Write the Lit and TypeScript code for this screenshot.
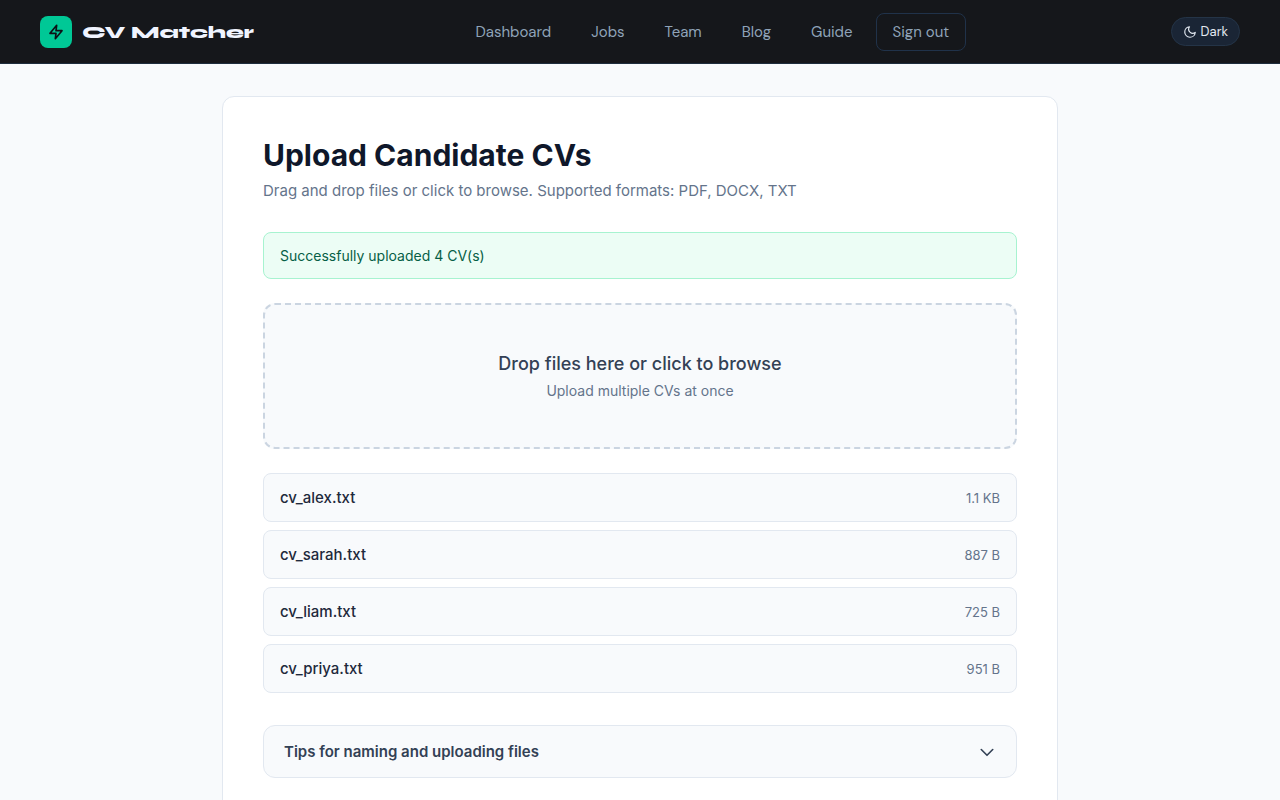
import { LitElement, html, css } from "lit";
import { customElement, property, state } from "lit/decorators.js";

interface CvFile {
  name: string;
  size: string;
}

@customElement("site-header")
export class SiteHeader extends LitElement {
  @property({ type: Array }) links: string[] = [];

  static styles = css`
    :host {
      display: block;
      background: #15171b;
      border-bottom: 1px solid #1e2d3d;
    }
    .bar {
      display: flex;
      align-items: center;
      justify-content: space-between;
      height: 63px;
      padding: 0 40px;
    }
    .brand {
      display: flex;
      align-items: center;
      gap: 10px;
      flex: 0 0 212px;
      color: #f0f4ff;
      text-decoration: none;
      font: 800 18px/28px Syne, "DejaVu Sans", sans-serif;
      white-space: nowrap;
    }
    .mark {
      display: grid;
      place-items: center;
      flex: none;
      width: 32px;
      height: 32px;
      border-radius: 8px;
      background: #00c896;
    }
    nav {
      display: flex;
      align-items: center;
      gap: 6px;
    }
    .link,
    .signout {
      font: 400 15px/20px "DM Sans", Inter, sans-serif;
      padding: 8px 16px;
      border: 1px solid transparent;
      border-radius: 8px;
      color: #8fa3b8;
      background: none;
      text-decoration: none;
      white-space: nowrap;
      cursor: pointer;
    }
    .signout {
      border-color: #20324a;
    }
    .theme {
      display: flex;
      align-items: center;
      gap: 4px;
      padding: 5px 11px;
      border: 1px solid #243447;
      border-radius: 15px;
      background: #1a2535;
      color: #e2e8f0;
      font: 400 13px/17px "DM Sans", Inter, sans-serif;
      cursor: pointer;
    }
  `;

  render() {
    return html`
      <header class="bar">
        <a class="brand" href="#">
          <span class="mark">
            <svg width="16" height="16" viewBox="0 0 24 24" fill="none" stroke="#0d1117" stroke-width="2.5" stroke-linejoin="round" stroke-linecap="round" aria-hidden="true">
              <path d="M13 2 3 14h9l-1 8 10-12h-9l1-8z" />
            </svg>
          </span>
          CV Matcher
        </a>
        <nav>
          ${this.links.map((l) => html`<a class="link" href="#">${l}</a>`)}
          <button class="signout">Sign out</button>
        </nav>
        <button class="theme">
          <svg width="14" height="14" viewBox="0 0 24 24" fill="none" stroke="currentColor" stroke-width="2" stroke-linejoin="round" stroke-linecap="round" aria-hidden="true">
            <path d="M21 12.79A9 9 0 1 1 11.21 3 7 7 0 0 0 21 12.79z" />
          </svg>
          Dark
        </button>
      </header>
    `;
  }
}

@customElement("app-root")
export class AppRoot extends LitElement {
  @state() private files: CvFile[] = [
    { name: "cv_alex.txt", size: "1.1 KB" },
    { name: "cv_sarah.txt", size: "887 B" },
    { name: "cv_liam.txt", size: "725 B" },
    { name: "cv_priya.txt", size: "951 B" },
  ];

  static styles = css`
    :host {
      display: block;
      height: 100vh;
      overflow: hidden;
      background: #f8fafc;
      font-family: Inter, sans-serif;
      color: #0f172a;
    }
    .card {
      box-sizing: border-box;
      max-width: 836px;
      margin: 32px auto;
      padding: 40px;
      border: 1px solid #e2e8f0;
      border-radius: 12px;
      background: #fff;
    }
    h1 {
      margin: 0 0 8px;
      font-size: 30px;
      line-height: 36px;
      font-weight: 700;
    }
    p {
      margin: 0;
    }
    .lead {
      margin-bottom: 32px;
      font-size: 15px;
      line-height: 19px;
      color: #64748b;
    }
    .notice {
      padding: 12px 16px;
      border: 1px solid #a7f3d0;
      border-radius: 8px;
      background: #ecfdf5;
      color: #065f46;
      font-size: 14px;
      line-height: 21px;
    }
    .drop {
      display: block;
      width: 100%;
      margin: 24px 0;
      padding: 46px 24px;
      border: 2px dashed #cbd5e1;
      border-radius: 12px;
      background: #f8fafc;
      font-family: inherit;
      text-align: center;
      cursor: pointer;
    }
    .drop-title {
      display: block;
      margin-bottom: 4px;
      font-size: 18px;
      line-height: 25px;
      font-weight: 500;
      color: #334155;
    }
    .drop-hint {
      display: block;
      font-size: 14px;
      line-height: 21px;
      color: #64748b;
    }
    .files {
      display: grid;
      gap: 8px;
      margin: 0 0 32px;
      padding: 0;
      list-style: none;
    }
    .file {
      display: flex;
      align-items: baseline;
      justify-content: space-between;
      padding: 12px 16px;
      border: 1px solid #e2e8f0;
      border-radius: 8px;
      background: #f8fafc;
      line-height: 23px;
    }
    .name {
      font-size: 15px;
      font-weight: 500;
      color: #1e293b;
    }
    .size {
      font-size: 13px;
      line-height: 20px;
      color: #64748b;
    }
    .tips {
      border: 1px solid #e2e8f0;
      border-radius: 12px;
      background: #f8fafc;
    }
    summary {
      display: flex;
      align-items: center;
      justify-content: space-between;
      padding: 14px 20px;
      font-size: 15px;
      line-height: 23px;
      font-weight: 600;
      color: #334155;
      list-style: none;
      cursor: pointer;
    }
  `;

  render() {
    return html`
      <site-header .links=${["Dashboard", "Jobs", "Team", "Blog", "Guide"]}></site-header>
      <main class="card">
        <h1>Upload Candidate CVs</h1>
        <p class="lead">Drag and drop files or click to browse. Supported formats: PDF, DOCX, TXT</p>
        <p class="notice" role="status">Successfully uploaded 4 CV(s)</p>
        <button class="drop">
          <span class="drop-title">Drop files here or click to browse</span>
          <span class="drop-hint">Upload multiple CVs at once</span>
        </button>
        <ul class="files">
          ${this.files.map(
            (f) => html`<li class="file"><span class="name">${f.name}</span><span class="size">${f.size}</span></li>`
          )}
        </ul>
        <details class="tips">
          <summary>
            Tips for naming and uploading files
            <svg width="18" height="18" viewBox="1 1 22 22" fill="none" stroke="currentColor" stroke-width="2" stroke-linecap="round" stroke-linejoin="round" aria-hidden="true">
              <path d="m5 9 7 7 7-7" />
            </svg>
          </summary>
        </details>
      </main>
    `;
  }
}
